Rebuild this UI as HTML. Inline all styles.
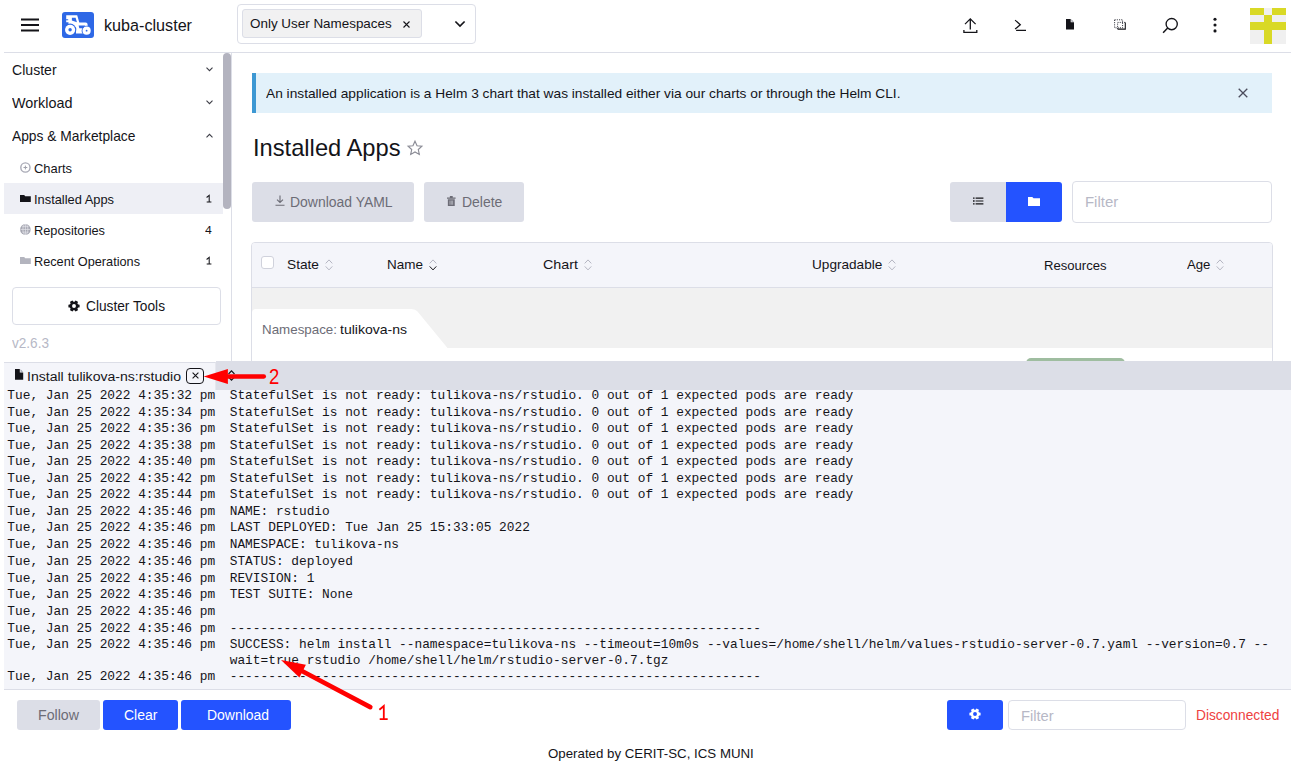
<!DOCTYPE html>
<html><head><meta charset="utf-8">
<style>
*{box-sizing:border-box;margin:0;padding:0}
html,body{width:1291px;height:765px;overflow:hidden;background:#fff;font-family:"Liberation Sans",sans-serif;color:#141419}
.a{position:absolute}
.t{position:absolute;white-space:nowrap;line-height:1;transform-origin:0 0}
.m{position:absolute;white-space:pre;line-height:1;font-family:"Liberation Mono",monospace;font-size:12.83px;color:#141419}
svg{position:absolute;overflow:visible}
</style></head><body>
<!-- ===== header ===== -->
<div class="a" style="left:4px;top:52px;width:1287px;height:1px;background:#dcdee7"></div>
<svg style="left:21px;top:18.4px" width="18" height="14"><path d="M0 1.5H18M0 7H18M0 12.5H18" stroke="#141419" stroke-width="2"/></svg>
<div class="a" style="left:62px;top:12px;width:32px;height:26px;border-radius:3px;background:#2e68e6"></div>
<svg id="tractor" style="left:62px;top:12px" width="32" height="26" viewBox="0 0 32 26">
 <g fill="#fff">
  <path d="M4.2 3.2H15.2L17.3 10.5H23.6Q25.6 10.5 25.6 12.5V16H27.5V21.5H14V16.5Q12 12.2 6.5 12V10.2H4.2V8.2H6.2V7.2H4.2Z"/>
  <circle cx="8.1" cy="17.8" r="6.2" fill="#2e68e6"/>
  <circle cx="24.6" cy="18.7" r="5" fill="#2e68e6"/>
  <circle cx="8.1" cy="17.8" r="5.1"/>
  <circle cx="24.6" cy="18.7" r="4.1"/>
 </g>
 <g fill="#2e68e6">
  <path d="M9.9 5.8H13.6L14.9 10.2L9.9 8.4Z"/>
  <path d="M16.6 13.6H23.2L21.2 16.3H17.3Z"/>
  <circle cx="8.1" cy="17.8" r="1.7"/>
  <circle cx="24.6" cy="18.7" r="0.9"/>
 </g>
</svg>
<div class="a" style="left:237px;top:4px;width:239px;height:40px;border:1px solid #dcdee7;border-radius:4px"></div>
<div class="a" style="left:242px;top:9px;width:180px;height:29px;border:1px solid #dcdee7;border-radius:3px;background:#f1f1f2"></div>
<svg style="left:403px;top:20.5px" width="7" height="7"><path d="M0.5 0.5L6.5 6.5M6.5 0.5L0.5 6.5" stroke="#141419" stroke-width="1.1" fill="none"/></svg>
<svg style="left:455px;top:21px" width="10" height="6"><path d="M0.4 0.5L5 5L9.6 0.5" stroke="#141419" stroke-width="1.7" fill="none"/></svg>
<!-- top right icons -->
<svg style="left:963px;top:18px" width="15" height="16"><path d="M7.3 0.9V11.5M2 6.1L7.3 0.8L12.6 6.1M0.9 12.1V14.3H13.8V12.1" stroke="#141419" stroke-width="1.3" fill="none"/></svg>
<svg style="left:1014px;top:19px" width="13" height="12"><path d="M1.1 1.1L6.3 5.8L1.1 10.1M2.1 11.4H12" stroke="#141419" stroke-width="1.25" fill="none"/></svg>
<svg style="left:1066px;top:19.3px" width="8" height="10.5"><path d="M0 0H4.7V3.3H8V10.5H0Z" fill="#141419"/><path d="M5.3 0.2L7.9 2.7H5.3Z" fill="#9a9ba5"/></svg>
<svg style="left:1114px;top:19px" width="12" height="11"><rect x="0.6" y="0.8" width="8" height="8" fill="none" stroke="#3a3b44" stroke-width="1" stroke-dasharray="1.1 1.1"/><path d="M3.6 10.1H11.3V3.4" fill="none" stroke="#141419" stroke-width="1.1"/><path d="M3.6 10.1V3.4H11.3" fill="none" stroke="#3a3b44" stroke-width="1" stroke-dasharray="1.1 1.1"/></svg>
<svg style="left:1162px;top:18px" width="16" height="16"><circle cx="9.7" cy="6.1" r="5.6" stroke="#141419" stroke-width="1.35" fill="none"/><path d="M5.7 10.1L1.1 14.8" stroke="#141419" stroke-width="1.5"/></svg>
<svg style="left:1213px;top:17px" width="4" height="16"><circle cx="2" cy="2.3" r="1.55" fill="#141419"/><circle cx="2" cy="8" r="1.55" fill="#141419"/><circle cx="2" cy="13.9" r="1.55" fill="#141419"/></svg>
<div class="a" style="left:1250px;top:8px;width:36px;height:36px;background:#f0f0f0"></div>
<div class="a" style="left:1250px;top:8px;width:14.2px;height:7px;background:#d9d926"></div>
<div class="a" style="left:1271.7px;top:8px;width:14.3px;height:7px;background:#d9d926"></div>
<div class="a" style="left:1264.2px;top:15px;width:7.5px;height:29px;background:#d9d926"></div>
<div class="a" style="left:1250px;top:22.3px;width:36px;height:7.4px;background:#d9d926"></div>
<!-- ===== sidebar ===== -->
<div class="a" style="left:231px;top:53px;width:1px;height:309px;background:#dcdee7"></div>
<div class="a" style="left:223px;top:53px;width:8px;height:156px;background:#b3b3bf;border-radius:4px"></div>
<div class="a" style="left:4px;top:183px;width:219px;height:30.5px;background:#eeeff5"></div>
<svg style="left:206.2px;top:67.2px" width="7" height="5"><path d="M0.5 0.7L3.5 3.7L6.5 0.7" stroke="#3d3e47" stroke-width="1.1" fill="none"/></svg>
<svg style="left:206.2px;top:100.2px" width="7" height="5"><path d="M0.5 0.7L3.5 3.7L6.5 0.7" stroke="#3d3e47" stroke-width="1.1" fill="none"/></svg>
<svg style="left:206.2px;top:133.2px" width="7" height="5"><path d="M0.5 4.3L3.5 1.3L6.5 4.3" stroke="#3d3e47" stroke-width="1.1" fill="none"/></svg>
<svg style="left:20px;top:162px" width="11" height="11"><circle cx="5.4" cy="5.5" r="4.6" fill="none" stroke="#a9aab6" stroke-width="1.4"/><path d="M5.4 3.6V7.4M3.5 5.5H7.3" stroke="#9fa0ab" stroke-width="1"/></svg>
<svg style="left:20px;top:195px" width="10.8" height="7"><path d="M0 0H4.2L5.2 1.2H10.8V7H0Z" fill="#141419"/></svg>
<svg style="left:19.9px;top:224.3px" width="10.8" height="10.8" viewBox="0 0 10 10"><circle cx="5" cy="5" r="4.9" fill="#a5a6b1"/><path d="M5 0.4V9.6M0.4 5H9.6M2 2.5H8M2 7.5H8" stroke="#e4e4ea" stroke-width=".7" fill="none"/><ellipse cx="5" cy="5" rx="2.3" ry="4.6" fill="none" stroke="#e4e4ea" stroke-width=".7"/></svg>
<svg style="left:20px;top:257px" width="10.8" height="7"><path d="M0 0H4.2L5.2 1.2H10.8V7H0Z" fill="#b3b4be"/></svg>
<div class="a" style="left:12px;top:287px;width:209px;height:38px;border:1px solid #dcdee7;border-radius:4px"></div>
<svg style="left:68.45px;top:299.9px" width="12" height="12" viewBox="-6 -6 12 12"><g fill="#141419"><circle r="4.3"/><rect x="-5.6" y="-1.6" width="11.2" height="3.2" rx=".7"/><rect x="-5.6" y="-1.6" width="11.2" height="3.2" rx=".7" transform="rotate(60)"/><rect x="-5.6" y="-1.6" width="11.2" height="3.2" rx=".7" transform="rotate(120)"/></g><circle r="1.95" fill="#fff"/></svg>
<svg style="left:206px;top:194.9px" width="6" height="8"><path d="M0.6 2.5L3.2 0.4V7M0.7 7H5.4" stroke="#141419" stroke-width="1.05" fill="none"/></svg><svg style="left:206px;top:256.9px" width="6" height="8"><path d="M0.6 2.5L3.2 0.4V7M0.7 7H5.4" stroke="#141419" stroke-width="1.05" fill="none"/></svg>
<!-- ===== main ===== -->
<div class="a" style="left:252px;top:73px;width:1020px;height:39.5px;background:#e2f1fa"></div>
<div class="a" style="left:252px;top:73px;width:4px;height:39.5px;background:#3d98d3"></div>
<svg style="left:1238px;top:88.2px" width="10" height="10"><path d="M0.7 0.7L9.3 9.3M9.3 0.7L0.7 9.3" stroke="#4b4c5c" stroke-width="1.3"/></svg>
<svg style="left:407px;top:140px" width="16" height="16" viewBox="0 0 16 16"><path d="M8 1.2L10.05 5.7L14.9 6.25L11.3 9.55L12.3 14.4L8 11.95L3.7 14.4L4.7 9.55L1.1 6.25L5.95 5.7Z" fill="none" stroke="#8b8c96" stroke-width="1.15" stroke-linejoin="miter"/></svg>
<div class="a" style="left:252px;top:182px;width:162px;height:39.5px;background:#dcdee7;border-radius:3px"></div>
<div class="a" style="left:424px;top:182px;width:100px;height:39.5px;background:#dcdee7;border-radius:3px"></div>
<svg style="left:275px;top:194.8px" width="10" height="11"><path d="M5 0.5V7.3M2 4.6L5 7.5L8 4.6M0.5 10.2H9.5" stroke="#6c6c76" stroke-width="1.1" fill="none"/></svg>
<svg style="left:447.3px;top:196px" width="8.6" height="10" viewBox="0 0 9 11" preserveAspectRatio="none"><path d="M0 1.6H9V2.9H0ZM3 0H6V1.6H3ZM0.9 3.6H8.1V11H0.9Z" fill="#6c6c76"/><path d="M3.1 5V9.6M4.5 5V9.6M5.9 5V9.6" stroke="#dcdee7" stroke-width=".6"/></svg>
<div class="a" style="left:950px;top:182px;width:56px;height:40px;background:#dcdee7;border-radius:3px 0 0 3px"></div>
<div class="a" style="left:1006px;top:182px;width:56px;height:40px;background:#2453ff;border-radius:0 3px 3px 0"></div>
<svg style="left:972.8px;top:196.8px" width="11" height="8"><path d="M2.6 1.1H10.4M2.6 4H10.4M2.6 6.9H10.4" stroke="#141419" stroke-width="1.2"/><path d="M0 1.1H1.6M0 4H1.6M0 6.9H1.6" stroke="#141419" stroke-width="1.4"/></svg>
<svg style="left:1028px;top:196.5px" width="12" height="9"><path d="M0 0H4.3L5.5 1.3H12V9H0Z" fill="#fff"/></svg>
<div class="a" style="left:1072px;top:181px;width:199.7px;height:41.5px;border:1px solid #dcdee7;border-radius:4px;background:#fff"></div>
<!-- table -->
<div class="a" style="left:251px;top:242px;width:1022px;height:130px;border:1px solid #dcdee7;border-radius:4px 4px 0 0;background:#fff"></div>
<div class="a" style="left:252px;top:243px;width:1020px;height:44px;background:#f4f5fa;border-radius:3px 3px 0 0"></div>
<div class="a" style="left:252px;top:287px;width:1020px;height:1px;background:#dcdee7"></div>
<div class="a" style="left:252px;top:288px;width:1020px;height:60px;background:#f1f1f1"></div>
<svg style="left:252px;top:309px" width="200" height="39"><path d="M0 39V4Q0 0 4 0H159.5Q163.5 0 165.5 2.5L195.5 39Z" fill="#fff"/></svg>
<div class="a" style="left:260.5px;top:256.3px;width:13px;height:13px;border:1px solid #d0d2dc;border-radius:3px;background:#fff"></div>
<svg style="left:325px;top:258.8px" width="8" height="12"><path d="M0.7 4.4L4 0.9L7.3 4.4" stroke="#b5b6c2" stroke-width="1" fill="none"/><path d="M0.7 7.4L4 10.9L7.3 7.4" stroke="#b5b6c2" stroke-width="1" fill="none"/></svg><svg style="left:429px;top:258.8px" width="8" height="12"><path d="M0.7 4.4L4 0.9L7.3 4.4" stroke="#b5b6c2" stroke-width="1" fill="none"/><path d="M0.7 7.4L4 10.9L7.3 7.4" stroke="#141419" stroke-width="1" fill="none"/></svg><svg style="left:584px;top:258.8px" width="8" height="12"><path d="M0.7 4.4L4 0.9L7.3 4.4" stroke="#b5b6c2" stroke-width="1" fill="none"/><path d="M0.7 7.4L4 10.9L7.3 7.4" stroke="#b5b6c2" stroke-width="1" fill="none"/></svg><svg style="left:888px;top:258.8px" width="8" height="12"><path d="M0.7 4.4L4 0.9L7.3 4.4" stroke="#b5b6c2" stroke-width="1" fill="none"/><path d="M0.7 7.4L4 10.9L7.3 7.4" stroke="#b5b6c2" stroke-width="1" fill="none"/></svg><svg style="left:1216px;top:258.8px" width="8" height="12"><path d="M0.7 4.4L4 0.9L7.3 4.4" stroke="#b5b6c2" stroke-width="1" fill="none"/><path d="M0.7 7.4L4 10.9L7.3 7.4" stroke="#b5b6c2" stroke-width="1" fill="none"/></svg>
<div class="a" style="left:1025.5px;top:357.5px;width:99px;height:10px;border-radius:6px;background:#9fbda0"></div>
<!-- ===== log panel ===== -->
<div class="a" style="left:216px;top:361px;width:1075px;height:28.5px;background:#dcdee7"></div>
<div class="a" style="left:4px;top:362px;width:212px;height:28px;background:#f4f5fa;border-top:1px solid #dcdee7;border-right:1.3px solid #e6e7ee"></div>
<div class="a" style="left:4px;top:389.5px;width:1287px;height:299.5px;background:#f4f5fa"></div>
<div class="a" style="left:4px;top:689px;width:1287px;height:1px;background:#dcdee7"></div>
<svg style="left:14.9px;top:369.2px" width="8.2" height="10.7"><path d="M0 0H4.8V3.4H8.2V10.7H0Z" fill="#141419"/><path d="M5.5 0.2L8.1 2.7H5.5Z" fill="#9a9ba5"/></svg>
<div class="a" style="left:186px;top:368.1px;width:17.8px;height:15.6px;border:1.3px solid #141419;border-radius:4px;background:#f4f5fa"></div>
<svg style="left:192.4px;top:372.4px" width="7" height="7"><path d="M0.6 0.6L6.4 6.4M6.4 0.6L0.6 6.4" stroke="#141419" stroke-width="1.1"/></svg>
<svg style="left:227.5px;top:370px" width="7" height="11"><path d="M0.5 4L3.5 0.8L6.5 4M0.5 7L3.5 10.2L6.5 7" stroke="#141419" stroke-width="1.1" fill="none"/></svg>
<!-- arrow 2 -->
<svg style="left:200px;top:362px" width="80" height="28"><path d="M3.7 14.5L27.9 7.05V21.95Z" fill="#ff0000"/><path d="M26 14.5H63.9" stroke="#ff0000" stroke-width="4.3" stroke-linecap="round"/></svg>
<!-- bottom bar -->
<div class="a" style="left:17px;top:700px;width:82.5px;height:30px;background:#dcdee7;border-radius:3px"></div>
<div class="a" style="left:103px;top:700px;width:75px;height:30px;background:#2453ff;border-radius:3px"></div>
<div class="a" style="left:181px;top:700px;width:110px;height:30px;background:#2453ff;border-radius:3px"></div>
<div class="a" style="left:947px;top:700px;width:56.3px;height:30px;background:#2453ff;border-radius:3px"></div>
<svg style="left:969px;top:708.4px" width="12" height="12" viewBox="-6 -6 12 12"><g fill="#fff"><circle r="4.3"/><rect x="-5.6" y="-1.6" width="11.2" height="3.2" rx=".7"/><rect x="-5.6" y="-1.6" width="11.2" height="3.2" rx=".7" transform="rotate(60)"/><rect x="-5.6" y="-1.6" width="11.2" height="3.2" rx=".7" transform="rotate(120)"/></g><circle r="1.95" fill="#2453ff"/></svg>
<div class="a" style="left:1008px;top:700px;width:178px;height:30px;border:1px solid #dcdee7;border-radius:4px;background:#fff"></div>
<div id="t0" class="t" style="left:104px;top:18px;font-size:16.8px;color:#141419;font-weight:400;transform:scaleX(0.9627);">kuba-cluster</div>
<div id="t1" class="t" style="left:250px;top:17px;font-size:13.4px;color:#141419;font-weight:400;transform:scaleX(1.0021);">Only User Namespaces</div>
<div id="t2" class="t" style="left:12px;top:64px;font-size:13.9px;color:#141419;font-weight:400;transform:scaleX(1.0136);">Cluster</div>
<div id="t3" class="t" style="left:12px;top:97px;font-size:13.9px;color:#141419;font-weight:400;transform:scaleX(1.0356);">Workload</div>
<div id="t4" class="t" style="left:12px;top:130px;font-size:13.9px;color:#141419;font-weight:400;transform:scaleX(0.9927);">Apps &amp; Marketplace</div>
<div id="t5" class="t" style="left:34px;top:162px;font-size:13.5px;color:#141419;font-weight:400;transform:scaleX(0.9556);">Charts</div>
<div id="t6" class="t" style="left:34px;top:193px;font-size:13.5px;color:#141419;font-weight:400;transform:scaleX(0.9517);">Installed Apps</div>
<div id="t7" class="t" style="left:34px;top:224px;font-size:13.5px;color:#141419;font-weight:400;transform:scaleX(0.9461);">Repositories</div>
<div id="t8" class="t" style="left:205px;top:225px;font-size:10.8px;color:#141419;font-weight:400;transform:scaleX(1.1304);">4</div>
<div id="t9" class="t" style="left:34px;top:255px;font-size:13.5px;color:#141419;font-weight:400;transform:scaleX(0.9417);">Recent Operations</div>
<div id="t10" class="t" style="left:86px;top:299px;font-size:14px;color:#141419;font-weight:400;transform:scaleX(0.9793);">Cluster Tools</div>
<div id="t11" class="t" style="left:12px;top:336px;font-size:14.2px;color:#b6b8c6;font-weight:400;transform:scaleX(0.9572);">v2.6.3</div>
<div id="t12" class="t" style="left:266px;top:87px;font-size:13.5px;color:#141419;font-weight:400;transform:scaleX(1.0163);">An installed application is a Helm 3 chart that was installed either via our charts or through the Helm CLI.</div>
<div id="t13" class="t" style="left:252.5px;top:137px;font-size:23.4px;color:#141419;font-weight:400;transform:scaleX(1.0127);">Installed Apps</div>
<div id="t14" class="t" style="left:290px;top:196px;font-size:13.8px;color:#6c6c76;font-weight:400;transform:scaleX(1.0108);">Download YAML</div>
<div id="t15" class="t" style="left:462.2px;top:196px;font-size:13.8px;color:#6c6c76;font-weight:400;transform:scaleX(1.0128);">Delete</div>
<div id="t16" class="t" style="left:1084.8px;top:195px;font-size:14.3px;color:#b7b8c6;font-weight:400;transform:scaleX(1.0446);">Filter</div>
<div id="t17" class="t" style="left:287px;top:258px;font-size:13.4px;color:#141419;font-weight:400;transform:scaleX(1.0230);">State</div>
<div id="t18" class="t" style="left:387px;top:258px;font-size:13.4px;color:#141419;font-weight:400;transform:scaleX(1.0074);">Name</div>
<div id="t19" class="t" style="left:543px;top:258px;font-size:13.4px;color:#141419;font-weight:400;transform:scaleX(1.0687);">Chart</div>
<div id="t20" class="t" style="left:811.7px;top:258px;font-size:13.4px;color:#141419;font-weight:400;transform:scaleX(1.0152);">Upgradable</div>
<div id="t21" class="t" style="left:1044px;top:259px;font-size:13.4px;color:#141419;font-weight:400;transform:scaleX(0.9779);">Resources</div>
<div id="t22" class="t" style="left:1186.6px;top:258px;font-size:13.4px;color:#141419;font-weight:400;transform:scaleX(0.9820);">Age</div>
<div id="t23" class="t" style="left:262px;top:323px;font-size:13.4px;color:#6c6c76;font-weight:400;transform:scaleX(0.9975);">Namespace:</div>
<div id="t24" class="t" style="left:340px;top:323px;font-size:13.4px;color:#141419;font-weight:400;transform:scaleX(1.0466);">tulikova-ns</div>
<div id="t25" class="t" style="left:27px;top:370px;font-size:13.7px;color:#141419;font-weight:400;transform:scaleX(1.0275);">Install tulikova-ns:rstudio</div>
<div id="t26" class="t" style="left:38px;top:709px;font-size:13.8px;color:#6c6c76;font-weight:400;transform:scaleX(1.0282);">Follow</div>
<div id="t27" class="t" style="left:123.5px;top:709px;font-size:13.8px;color:#fff;font-weight:400;transform:scaleX(1.0156);">Clear</div>
<div id="t28" class="t" style="left:207px;top:709px;font-size:13.8px;color:#fff;font-weight:400;transform:scaleX(1.0104);">Download</div>
<div id="t29" class="t" style="left:1020.9px;top:709px;font-size:14.3px;color:#b7b8c6;font-weight:400;transform:scaleX(1.0289);">Filter</div>
<div id="t30" class="t" style="left:1196.2px;top:709px;font-size:13.8px;color:#ee4141;font-weight:400;transform:scaleX(0.9963);">Disconnected</div>
<div id="t31" class="t" style="left:547.8px;top:747px;font-size:13.3px;color:#141419;font-weight:400;transform:scaleX(0.9983);">Operated by CERIT-SC, ICS MUNI</div>
<div id="t32" class="t" style="left:268.7px;top:367px;font-size:21.5px;color:#ff0000;font-weight:400;transform:scaleX(0.8606);">2</div>
<div class="m" style="left:7.3px;top:390px">Tue, Jan 25 2022 4:35:32 pm</div>
<div class="m" style="left:229.7px;top:390px">StatefulSet is not ready: tulikova-ns/rstudio. 0 out of 1 expected pods are ready</div>
<div class="m" style="left:7.3px;top:407px">Tue, Jan 25 2022 4:35:34 pm</div>
<div class="m" style="left:229.7px;top:407px">StatefulSet is not ready: tulikova-ns/rstudio. 0 out of 1 expected pods are ready</div>
<div class="m" style="left:7.3px;top:423px">Tue, Jan 25 2022 4:35:36 pm</div>
<div class="m" style="left:229.7px;top:423px">StatefulSet is not ready: tulikova-ns/rstudio. 0 out of 1 expected pods are ready</div>
<div class="m" style="left:7.3px;top:440px">Tue, Jan 25 2022 4:35:38 pm</div>
<div class="m" style="left:229.7px;top:440px">StatefulSet is not ready: tulikova-ns/rstudio. 0 out of 1 expected pods are ready</div>
<div class="m" style="left:7.3px;top:456px">Tue, Jan 25 2022 4:35:40 pm</div>
<div class="m" style="left:229.7px;top:456px">StatefulSet is not ready: tulikova-ns/rstudio. 0 out of 1 expected pods are ready</div>
<div class="m" style="left:7.3px;top:473px">Tue, Jan 25 2022 4:35:42 pm</div>
<div class="m" style="left:229.7px;top:473px">StatefulSet is not ready: tulikova-ns/rstudio. 0 out of 1 expected pods are ready</div>
<div class="m" style="left:7.3px;top:489px">Tue, Jan 25 2022 4:35:44 pm</div>
<div class="m" style="left:229.7px;top:489px">StatefulSet is not ready: tulikova-ns/rstudio. 0 out of 1 expected pods are ready</div>
<div class="m" style="left:7.3px;top:506px">Tue, Jan 25 2022 4:35:46 pm</div>
<div class="m" style="left:229.7px;top:506px">NAME: rstudio</div>
<div class="m" style="left:7.3px;top:522px">Tue, Jan 25 2022 4:35:46 pm</div>
<div class="m" style="left:229.7px;top:522px">LAST DEPLOYED: Tue Jan 25 15:33:05 2022</div>
<div class="m" style="left:7.3px;top:539px">Tue, Jan 25 2022 4:35:46 pm</div>
<div class="m" style="left:229.7px;top:539px">NAMESPACE: tulikova-ns</div>
<div class="m" style="left:7.3px;top:556px">Tue, Jan 25 2022 4:35:46 pm</div>
<div class="m" style="left:229.7px;top:556px">STATUS: deployed</div>
<div class="m" style="left:7.3px;top:573px">Tue, Jan 25 2022 4:35:46 pm</div>
<div class="m" style="left:229.7px;top:573px">REVISION: 1</div>
<div class="m" style="left:7.3px;top:589px">Tue, Jan 25 2022 4:35:46 pm</div>
<div class="m" style="left:229.7px;top:589px">TEST SUITE: None</div>
<div class="m" style="left:7.3px;top:606px">Tue, Jan 25 2022 4:35:46 pm</div>
<div class="m" style="left:7.3px;top:623px">Tue, Jan 25 2022 4:35:46 pm</div>
<div class="m" style="left:229.7px;top:623px">---------------------------------------------------------------------</div>
<div class="m" style="left:7.3px;top:639px">Tue, Jan 25 2022 4:35:46 pm</div>
<div class="m" style="left:229.7px;top:639px">SUCCESS: helm install --namespace=tulikova-ns --timeout=10m0s --values=/home/shell/helm/values-rstudio-server-0.7.yaml --version=0.7 --</div>
<div class="m" style="left:229.7px;top:655px">wait=true rstudio /home/shell/helm/rstudio-server-0.7.tgz</div>
<div class="m" style="left:7.3px;top:671px">Tue, Jan 25 2022 4:35:46 pm</div>
<div class="m" style="left:229.7px;top:671px">---------------------------------------------------------------------</div>
<!-- arrow 1 (over text) -->
<svg style="left:270px;top:650px" width="120" height="70"><path d="M11 10L35.9 14.7L29.4 27.6Z" fill="#ff0000"/><path d="M31 20.5L100.3 57.1" stroke="#ff0000" stroke-width="4.6" stroke-linecap="round"/></svg>
<svg style="left:378px;top:705px" width="11" height="16"><path d="M1.4 4.7L5.8 1V14.2M1.7 14.2H9.7" stroke="#ff0000" stroke-width="1.8" fill="none"/></svg>
</body></html>
